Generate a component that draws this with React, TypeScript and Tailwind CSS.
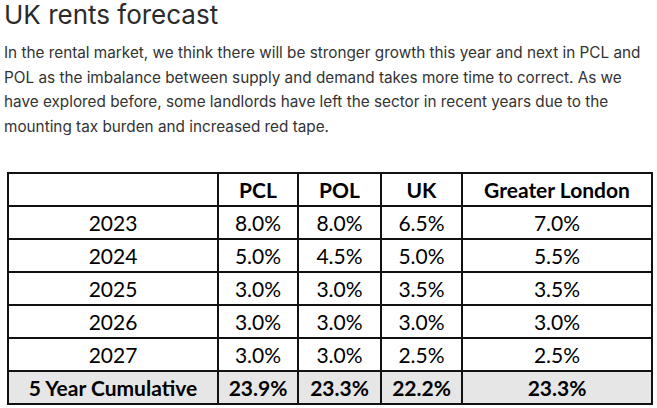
export default function App() {
  const rows = [
    ["2023", "8.0%", "8.0%", "6.5%", "7.0%"],
    ["2024", "5.0%", "4.5%", "5.0%", "5.5%"],
    ["2025", "3.0%", "3.0%", "3.5%", "3.5%"],
    ["2026", "3.0%", "3.0%", "3.0%", "3.0%"],
    ["2027", "3.0%", "3.0%", "2.5%", "2.5%"],
  ];
  const total = ["5 Year Cumulative", "23.9%", "23.3%", "22.2%", "23.3%"];
  const cell = "border-2 border-[#111] h-[33px] p-0 text-center";

  return (
    <div className="w-[657px] h-[408px] bg-white overflow-hidden">
      <div className="px-1" style={{ fontFamily: "Inter, 'Noto Sans', sans-serif" }}>
        <h1 className="text-[26px] leading-[30px] text-[#2b2b2b]">UK rents forecast</h1>
        <p className="mt-[11px] text-[15.3px] leading-[24.5px] text-[#333]">
          In the rental market, we think there will be stronger growth this year and next in PCL and POL as the
          imbalance between supply and demand takes more time to correct. As we have explored before, some landlords
          have left the sector in recent years due to the mounting tax burden and increased red tape.
        </p>
      </div>

      <table
        className="ml-[7px] mt-[33px] w-[644px] border-collapse table-fixed text-[21px] leading-none text-black"
        style={{ fontFamily: "Lato, 'Open Sans', sans-serif" }}
      >
        <colgroup>
          <col className="w-[210px]" />
          <col className="w-[80px]" />
          <col className="w-[83px]" />
          <col className="w-[81px]" />
          <col className="w-[190px]" />
        </colgroup>
        <thead>
          <tr>
            <th className={cell}></th>
            <th className={cell + " font-bold"}>PCL</th>
            <th className={cell + " font-bold"}>POL</th>
            <th className={cell + " font-bold"}>UK</th>
            <th className={cell + " font-bold"}>Greater London</th>
          </tr>
        </thead>
        <tbody>
          {rows.map((r) => (
            <tr key={r[0]}>
              {r.map((v, i) => (
                <td key={i} className={cell}>
                  {v}
                </td>
              ))}
            </tr>
          ))}
          <tr className="bg-[#e7e6e6]">
            {total.map((v, i) => (
              <td key={i} className={cell + " font-bold"}>
                {v}
              </td>
            ))}
          </tr>
        </tbody>
      </table>
    </div>
  );
}
